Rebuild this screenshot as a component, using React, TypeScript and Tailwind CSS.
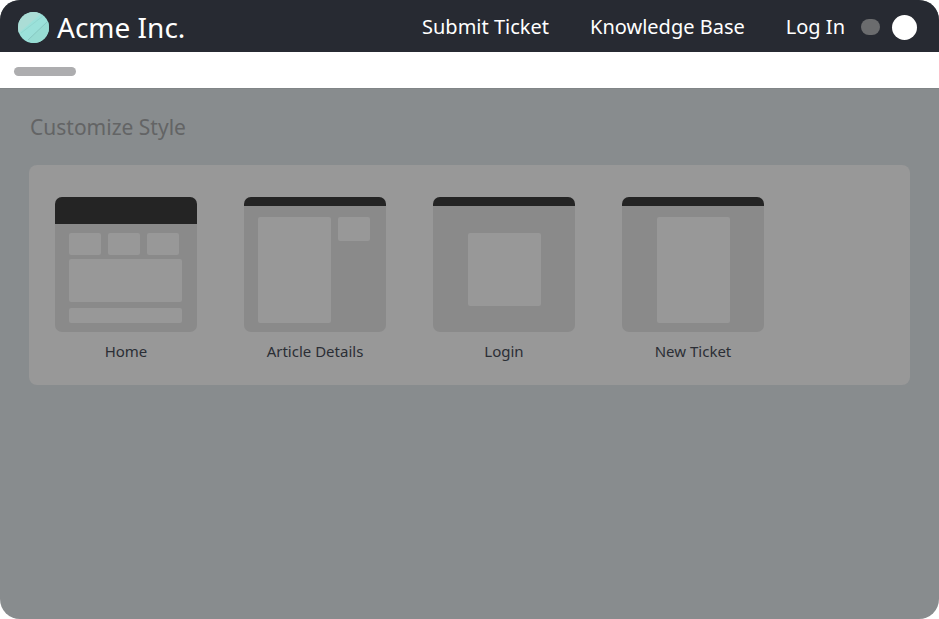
import type { ReactNode } from "react";

function Logo() {
  return (
    <svg viewBox="0 0 31 31" className="h-[31px] w-[31px] shrink-0" aria-hidden="true">
      <defs>
        <clipPath id="logo-disc">
          <circle cx="15.5" cy="15.5" r="15.5" />
        </clipPath>
      </defs>
      <g clipPath="url(#logo-disc)">
        <rect width="31" height="31" fill="#9be1da" />
        <path d="M0 0H25L2 20L0 22Z" fill="#abddd6" />
        <path d="M29 10L10 28L13 31H31V10Z" fill="#97dcd3" />
        <path d="M25 4L3 21" stroke="#8bcfc8" strokeWidth="0.6" />
        <path d="M29 10L10 28" stroke="#7fbdb7" strokeWidth="0.7" />
      </g>
    </svg>
  );
}

function Block({ className }: { className: string }) {
  return <span className={`block rounded-xs bg-[#989898] ${className}`} />;
}

function Template({
  label,
  bar = "h-[9px]",
  body,
  children,
}: {
  label: string;
  bar?: string;
  body: string;
  children: ReactNode;
}) {
  return (
    <button type="button" className="flex w-[142px] cursor-pointer flex-col text-center">
      <span className="flex h-[135px] w-full flex-col overflow-hidden rounded-[7px] bg-[#8a8a8a]">
        <span className={`block shrink-0 bg-[#242424] ${bar}`} />
        <span className={`flex flex-1 ${body}`}>{children}</span>
      </span>
      <span className="mt-[7px] w-full text-[15px] leading-6 text-[#2b2e35]">{label}</span>
    </button>
  );
}

export default function App() {
  return (
    <div className="flex min-h-screen flex-col overflow-hidden rounded-[20px] bg-[#888c8e] font-['Noto_Sans',sans-serif]">
      <header className="flex h-[52px] items-center justify-between bg-[#272a32] pt-0.5 pr-[22px] pl-[18px] text-white">
        <a href="#home" className="flex items-center gap-2 text-[28px] leading-8">
          <Logo />
          Acme Inc.
        </a>
        <div className="flex items-center">
          <nav className="flex items-center gap-[41px] text-xl">
            <a href="#submit">Submit Ticket</a>
            <a href="#knowledge">Knowledge Base</a>
            <a href="#login">Log In</a>
          </nav>
          <span className="ml-4 h-4 w-[19px] rounded-full bg-[#6b6c6e]" />
          <span className="ml-3 h-[25px] w-[25px] rounded-full bg-white" />
        </div>
      </header>

      <div className="flex h-9 items-center bg-white px-3.5 pt-0.5">
        <span className="h-[9px] w-[62px] rounded-full bg-[#adadaf]" />
      </div>

      <main className="flex-1 border-t border-[#818587] px-[29px] pt-[22px] pb-8">
        <h1 className="pl-px text-[21px] leading-8 text-[#636465]">Customize Style</h1>
        <section className="mt-[22px] flex flex-wrap gap-x-[47px] gap-y-8 rounded-lg bg-[#989898] px-[26px] pt-8 pb-[22px]">
          <Template label="Home" bar="h-[27px]" body="flex-col gap-1 pt-[9px] pr-[15px] pb-[9px] pl-3.5">
            <span className="flex gap-[7px]">
              <Block className="h-[22px] w-8" />
              <Block className="h-[22px] w-8" />
              <Block className="h-[22px] w-8" />
            </span>
            <Block className="h-[43px] w-full" />
            <Block className="mt-auto h-[15px] w-full" />
          </Template>
          <Template label="Article Details" body="items-start gap-[7px] px-3.5 pt-[11px] pb-[9px]">
            <Block className="h-full w-[73px]" />
            <Block className="h-6 w-8" />
          </Template>
          <Template label="Login" body="justify-center pt-[27px]">
            <Block className="h-[73px] w-[73px]" />
          </Template>
          <Template label="New Ticket" body="justify-center pt-[11px] pb-[9px]">
            <Block className="h-full w-[73px]" />
          </Template>
        </section>
      </main>
    </div>
  );
}
